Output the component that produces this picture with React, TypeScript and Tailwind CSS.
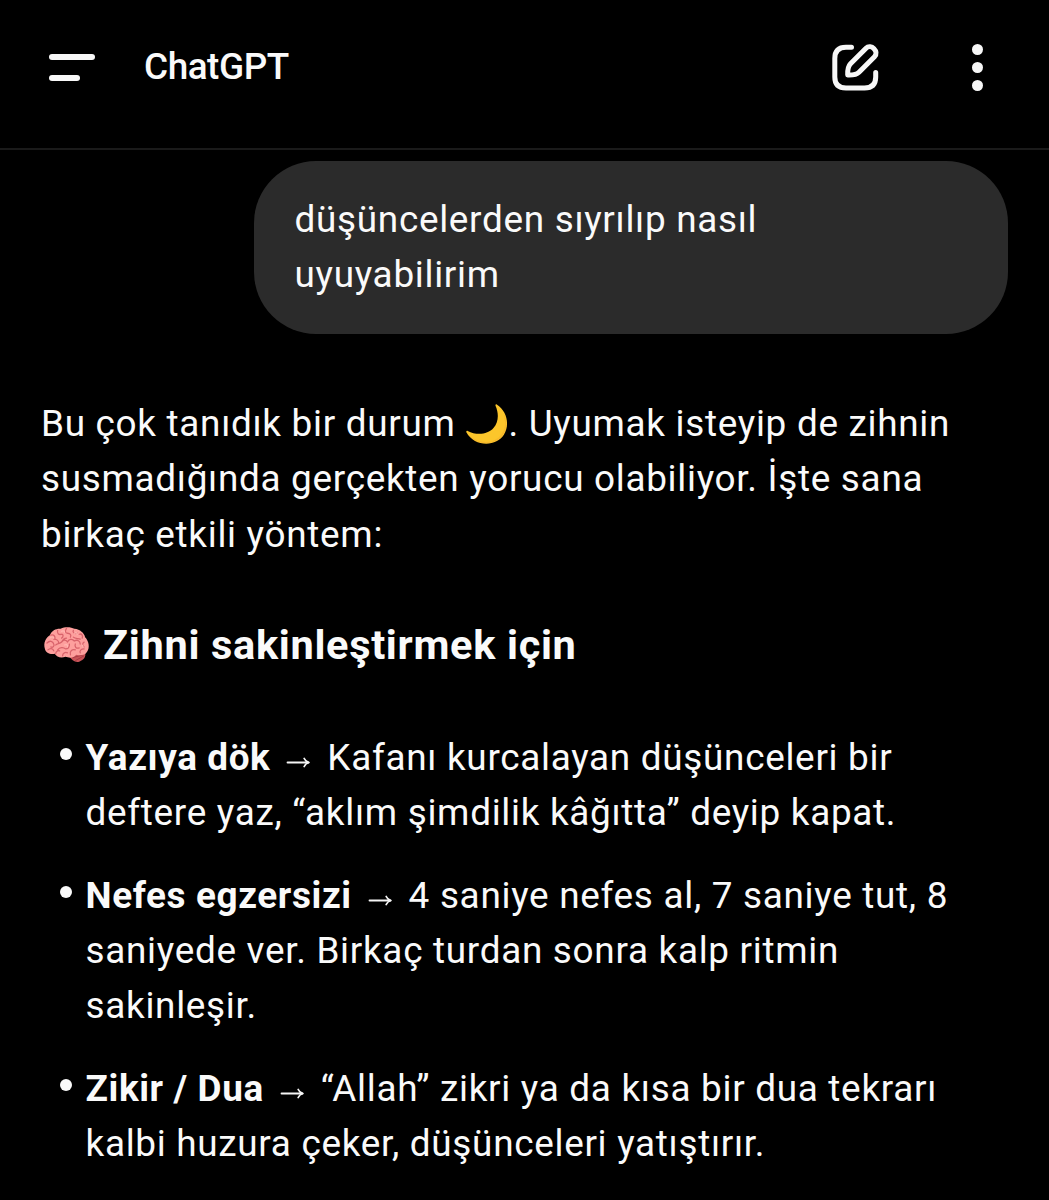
import React from 'react';

const MoonEmoji: React.FC = () => (
  <svg viewBox="-.5 2 42 42" className="inline-block w-[43px] h-[43px] align-[-10px]" aria-label="hilal">
    <path
      d="M30.500 3.500C40.500 10 43.500 23 37.500 33C30.500 44.500 9 45.500 .8 30.500C.5 29.300 1.300 28.700 2.200 29.300C10 33.500 21.500 33.300 27.300 26.500C32.300 21 32.800 12.500 29.300 4.600C29 3.500 29.800 3 30.500 3.500Z"
      fill="#fcc62b"
    />
    <path
      d="M38 17C40.500 26 36 36 26 39.300C16 41.800 7 38 1.500 31.300C9 43.500 27 44 35.500 35C40.500 29 41 20 37.500 12.500Z"
      fill="#f2a52c"
      opacity=".4"
    />
  </svg>
);

const BrainEmoji: React.FC = () => (
  <svg viewBox="0 0 48 40" className="ml-[2px] w-[47px] h-[40px] shrink-0" aria-label="beyin">
    <path d="M27 31C29 36 33 38 37 37C42 35 44 32 43 28L31 27Z" fill="#c95358" />
    <path d="M30 33l11-3M33 36l9-5" stroke="#a83a44" strokeWidth="1" fill="none" />
    <path
      d="M2 24C0 18 3 12 7 10C9 5 14 3 18 3.500C23 1 29 2 32 3.500C38 4 42 8 43 12C47 16 48 23 45 27C43 31 37 31 34 30C31 34 26 33 23 32C18 34 14 32 12 29C7 30 3 28 2 24Z"
      fill="#fd9f9d"
    />
    <g fill="none" stroke="#d8636b" strokeWidth="1.300" strokeLinecap="round" strokeLinejoin="round">
      <path d="M8 10c3-1 5 1 4 4M4 18c3-3 6-2 7 1c1 2-1 4-3 3M15 5c-1 3 1 5 4 4c2 0 2 3 0 4M11 14c3 0 5 2 5 4M24 3c-2 3-1 5 1 5c3 0 4 2 3 4M31 5c-1 2 1 4 4 3M37 9c3-1 4 2 3 4" />
      <path d="M19 17c2-3 5-2 6 0c1-3 5-4 7-1c3-2 6 0 6 3M24 13c-3 0-4 2-5 4c-2 2-5 1-6 3M31 12c2 2 5 1 7 2M15 25c2-3 6-3 8-1c3 0 4-2 4-5M5 25c2-2 5-2 6 1M13 29c0-2 2-4 4-3M20 31c0-3 3-4 5-3M28 30c-1-4 2-6 5-5M33 19c-1 3 1 5 4 4M42 17c-2 1-2 4 0 5M38 28c-1-2 1-4 4-4" />
    </g>
    <path d="M7 13c2-2 4-1 4 0M19 6c2-1 3 0 3 1M32 8c2-1 3 0 3 1M22 20c2-1 4 0 3 2M40 20l1 2" stroke="#ffb7b2" strokeWidth="1.200" fill="none" strokeLinecap="round" />
  </svg>
);

const Arrow: React.FC = () => (
  <svg viewBox="0 0 47 20" className="inline-block w-[47px] h-[20px] align-[-2px]" fill="none" stroke="#f5f5f5" strokeWidth="1.800" strokeLinecap="round" strokeLinejoin="round">
    <path d="M17.500 10.500h21" />
    <path d="M34.200 6.500c1 2.200 2.400 3.300 4.600 4c-2.200.7-3.600 1.800-4.600 4" />
  </svg>
);

const Header: React.FC = () => (
  <header className="h-[149.500px] border-b-2 border-[#1a1a1a] flex items-start pl-[49px] pr-[66px]">
    <button className="mt-[54px] w-[47px] space-y-[14.500px]" aria-label="Menü">
      <span className="block w-[46px] h-[6px] rounded-full bg-[#f8f8f8]" />
      <span className="block w-[31px] h-[6px] rounded-full bg-[#f8f8f8]" />
    </button>
    <h1 className="ml-[48px] mt-[39px] leading-[56px] text-[36.900px] tracking-[-0.450px] font-medium text-[#fafafa]">ChatGPT</h1>
    <button className="ml-auto mt-[42.500px]" aria-label="Yeni sohbet">
      <svg viewBox="0 0 50 50" className="w-[50px] h-[50px]" fill="none" stroke="#f7f7f7" strokeWidth="5" strokeLinecap="round" strokeLinejoin="round">
        <path d="M21.500 4.200H16C8.500 4.200 4.800 8 4.800 15.500V34C4.800 41.500 8.500 45 16 45H34.500C42 45 45.700 41.500 45.700 34V29.500" />
        <path d="M36 5.200L20.500 20.700C18.500 22.700 17.500 27 17.700 32C22.500 32.200 27 31.200 29 29.200L44.500 13.700C49.500 8.700 41 .2 36 5.200Z" />
      </svg>
    </button>
    <button className="ml-[92px] mt-[44px] flex flex-col gap-[7px]" aria-label="Diğer">
      <span className="size-[11px] rounded-full bg-[#f7f7f7]" />
      <span className="size-[11px] rounded-full bg-[#f7f7f7]" />
      <span className="size-[11px] rounded-full bg-[#f7f7f7]" />
    </button>
  </header>
);

const Tip: React.FC<{ title: string; children: React.ReactNode }> = ({ title, children }) => (
  <li className="flex items-start whitespace-nowrap">
    <span className="mt-[18px] ml-[18.500px] mr-[14px] size-[12px] shrink-0 rounded-full bg-[#fafafa]" />
    <p>
      <strong className="font-bold tracking-[0.620px]">{title}</strong>
      <Arrow />
      {children}
    </p>
  </li>
);

export default function App() {
  return (
    <div className="w-[1049px] h-[1200px] overflow-hidden bg-black text-[#fafafa] font-[Roboto,sans-serif]">
      <Header />
      <main className="px-[41px] pt-[11.500px] text-[36.900px] leading-[55.300px] tracking-[0.700px]">
        <div className="ml-auto w-[754px] h-[173px] rounded-[62px] bg-[#2b2b2b] px-[40.500px] py-[31px]">
          düşüncelerden sıyrılıp nasıl
          <br />
          uyuyabilirim
        </div>

        <p className="mt-[62px] whitespace-nowrap">
          Bu çok tanıdık bir durum <MoonEmoji />. Uyumak isteyip de zihnin
          <br />
          susmadığında gerçekten yorucu olabiliyor. İşte sana
          <br />
          birkaç etkili yöntem:
        </p>

        <h2 className="mt-[52px] flex items-center text-[41.500px] leading-[62px] tracking-[0.680px] font-bold">
          <BrainEmoji />
          <span className="ml-[13px]">Zihni sakinleştirmek için</span>
        </h2>

        <ul className="mt-[54px] space-y-[27.400px]">
          <Tip title="Yazıya dök">
            {' '}Kafanı kurcalayan düşünceleri bir
            <br />
            deftere yaz, “aklım şimdilik kâğıtta” deyip kapat.
          </Tip>
          <Tip title="Nefes egzersizi">
            {' '}4 saniye nefes al, 7 saniye tut, 8
            <br />
            saniyede ver. Birkaç turdan sonra kalp ritmin
            <br />
            sakinleşir.
          </Tip>
          <Tip title="Zikir / Dua">
            {' '}“Allah” zikri ya da kısa bir dua tekrarı
            <br />
            kalbi huzura çeker, düşünceleri yatıştırır.
          </Tip>
        </ul>
      </main>
    </div>
  );
}
